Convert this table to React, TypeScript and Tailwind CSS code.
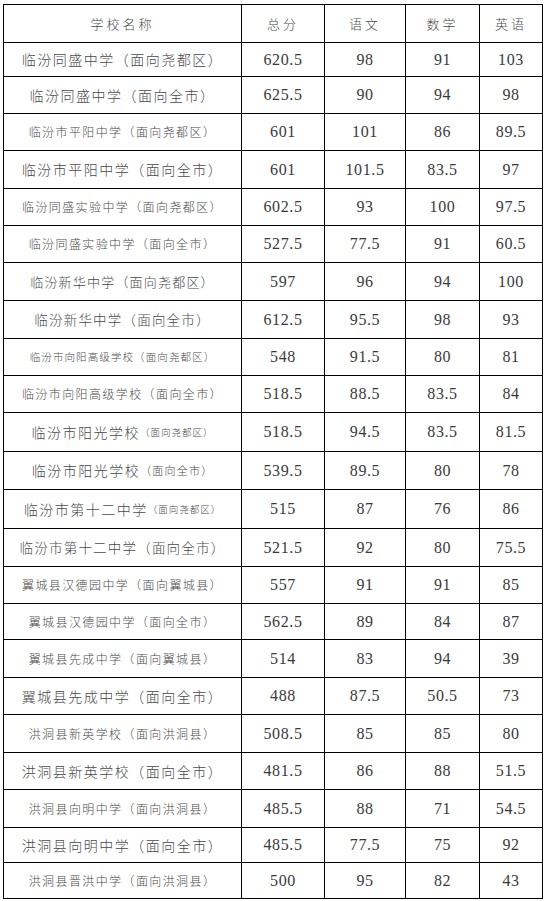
const L = 'text-[14px] tracking-[1.5px]';
const L2 = 'text-[13.5px] tracking-[1.2px]';
const L3 = 'text-[13px] tracking-[1.2px]';
const M = 'text-[12px] tracking-[1.4px]';
const S = 'text-[10.5px] tracking-[1.1px]';
const XS = 'text-[9.5px] tracking-[1px]';
const P12 = 'text-[11px] tracking-[1.2px]';

type Part = [string, string];

interface Row {
  name: Part[];
  h: string;
  v: string[];
}

const rows: Row[] = [
  { name: [['临汾同盛中学（面向尧都区）', L]], h: 'h-[33px]', v: ['620.5', '98', '91', '103'] },
  { name: [['临汾同盛中学（面向全市）', L]], h: 'h-[36px]', v: ['625.5', '90', '94', '98'] },
  { name: [['临汾市平阳中学（面向尧都区）', M]], h: 'h-[36px]', v: ['601', '101', '86', '89.5'] },
  { name: [['临汾市平阳中学（面向全市）', L]], h: 'h-[37px]', v: ['601', '101.5', '83.5', '97'] },
  { name: [['临汾同盛实验中学（面向尧都区）', M]], h: 'h-[36px]', v: ['602.5', '93', '100', '97.5'] },
  { name: [['临汾同盛实验中学（面向全市）', M]], h: 'h-[36px]', v: ['527.5', '77.5', '91', '60.5'] },
  { name: [['临汾新华中学（面向尧都区）', L3]], h: 'h-[37px]', v: ['597', '96', '94', '100'] },
  { name: [['临汾新华中学（面向全市）', L2]], h: 'h-[37px]', v: ['612.5', '95.5', '98', '93'] },
  { name: [['临汾市向阳高级学校（面向尧都区）', S]], h: 'h-[36px]', v: ['548', '91.5', '80', '81'] },
  { name: [['临汾市向阳高级学校（面向全市）', M]], h: 'h-[36px]', v: ['518.5', '88.5', '83.5', '84'] },
  { name: [['临汾市阳光学校', L], ['（面向尧都区）', XS]], h: 'h-[38px]', v: ['518.5', '94.5', '83.5', '81.5'] },
  { name: [['临汾市阳光学校', L], ['（面向全市）', P12]], h: 'h-[37px]', v: ['539.5', '89.5', '80', '78'] },
  { name: [['临汾市第十二中学', L], ['（面向尧都区）', XS]], h: 'h-[38px]', v: ['515', '87', '76', '86'] },
  { name: [['临汾市第十二中学（面向全市）', L2]], h: 'h-[37px]', v: ['521.5', '92', '80', '75.5'] },
  { name: [['翼城县汉德园中学（面向翼城县）', M]], h: 'h-[36px]', v: ['557', '91', '91', '85'] },
  { name: [['翼城县汉德园中学（面向全市）', M]], h: 'h-[35px]', v: ['562.5', '89', '84', '87'] },
  { name: [['翼城县先成中学（面向翼城县）', M]], h: 'h-[37px]', v: ['514', '83', '94', '39'] },
  { name: [['翼城县先成中学（面向全市）', L]], h: 'h-[36px]', v: ['488', '87.5', '50.5', '73'] },
  { name: [['洪洞县新英学校（面向洪洞县）', M]], h: 'h-[37px]', v: ['508.5', '85', '85', '80'] },
  { name: [['洪洞县新英学校（面向全市）', L]], h: 'h-[36px]', v: ['481.5', '86', '88', '51.5'] },
  { name: [['洪洞县向明中学（面向洪洞县）', M]], h: 'h-[37px]', v: ['485.5', '88', '71', '54.5'] },
  { name: [['洪洞县向明中学（面向全市）', L]], h: 'h-[34px]', v: ['485.5', '77.5', '75', '92'] },
  { name: [['洪洞县晋洪中学（面向洪洞县）', M]], h: 'h-[35px]', v: ['500', '95', '82', '43'] },
];

const headers = ['学校名称', '总分', '语文', '数学', '英语'];

const rowGrid = 'grid grid-cols-[237px_82px_80px_73px_62px] gap-px';
const cjkCell =
  "bg-white flex items-center justify-center whitespace-nowrap font-light text-[#4a4a4a] [font-family:'Noto_Sans_CJK_SC',sans-serif]";
const headCell = cjkCell + ' text-[13px] tracking-[3px]';
const numCell =
  "bg-white flex items-center justify-center text-[16px] tracking-[0.6px] text-[#3a3a3a] [font-family:'Liberation_Serif',serif]";

export default function App() {
  return (
    <div className="min-h-[901px] w-[546px] bg-white pl-[3px] pt-[4px]">
      <div className="flex w-fit flex-col gap-px bg-black p-px">
        <div className={rowGrid + ' h-[37px]'}>
          {headers.map(h => (
            <div key={h} className={headCell}>
              {h}
            </div>
          ))}
        </div>

        {rows.map((r, i) => (
          <div key={i} className={rowGrid + ' ' + r.h}>
            <div className={cjkCell}>
              {r.name.map(([t, cls]) => (
                <span key={t} className={cls}>{t}</span>
              ))}
            </div>
            {r.v.map((v, j) => (
              <div key={j} className={numCell}>
                {v}
              </div>
            ))}
          </div>
        ))}
      </div>
    </div>
  );
}
